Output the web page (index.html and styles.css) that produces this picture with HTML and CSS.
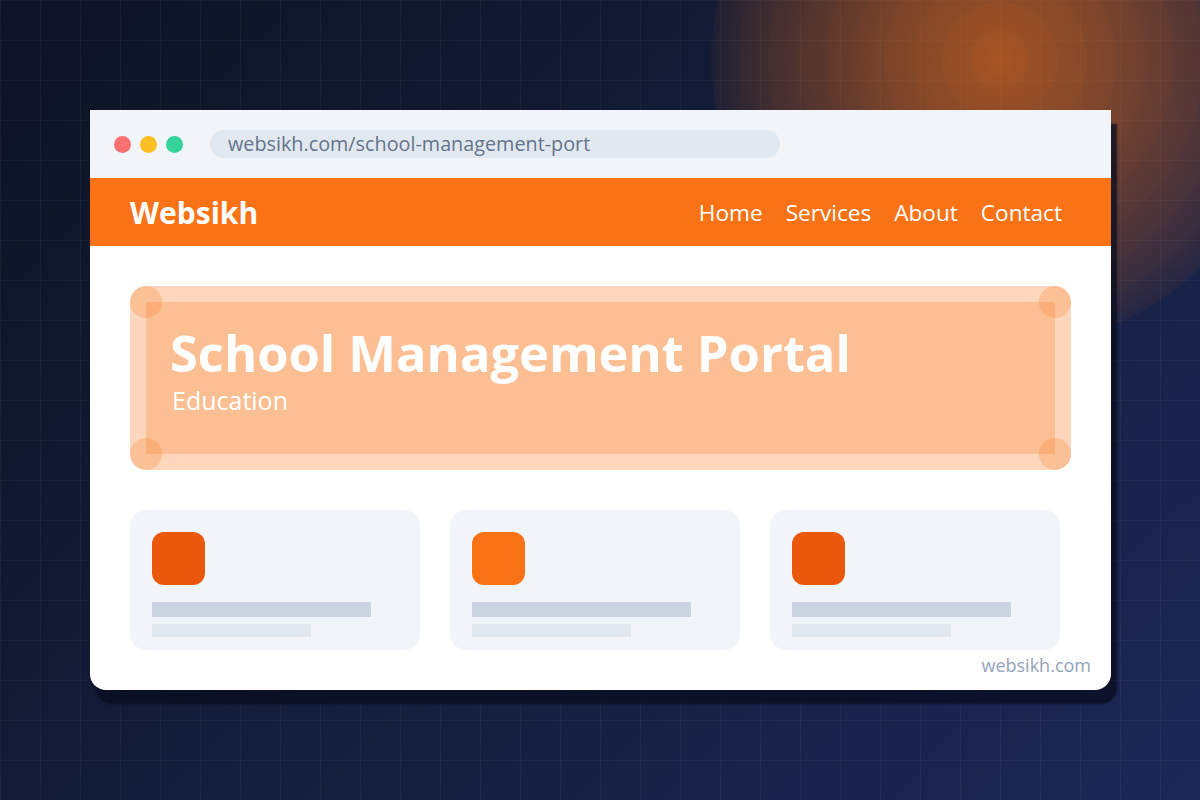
FILE: index.html
```html
<!DOCTYPE html>
<html>
<head>
<meta charset="utf-8">
<link rel="stylesheet" href="styles.css">
</head>
<body>
<div class="stage">
  <div class="window">
    <div class="titlebar">
      <div class="dots">
        <span class="dot red"></span>
        <span class="dot yellow"></span>
        <span class="dot green"></span>
      </div>
      <div class="url">websikh.com/school-management-port</div>
    </div>
    <div class="navbar">
      <div class="brand">Websikh</div>
      <nav class="links">
        <span>Home</span>
        <span>Services</span>
        <span>About</span>
        <span>Contact</span>
      </nav>
    </div>
    <div class="content">
      <div class="hero">
        <div class="hero-inner"></div>
        <span class="corner tl"></span>
        <span class="corner tr"></span>
        <span class="corner bl"></span>
        <span class="corner br"></span>
        <div class="hero-text">
          <h1>School Management Portal</h1>
          <p>Education</p>
        </div>
      </div>
      <div class="cards">
        <div class="card">
          <div class="icon dark"></div>
          <div class="bar long"></div>
          <div class="bar short"></div>
        </div>
        <div class="card">
          <div class="icon light"></div>
          <div class="bar long"></div>
          <div class="bar short"></div>
        </div>
        <div class="card">
          <div class="icon dark"></div>
          <div class="bar long"></div>
          <div class="bar short"></div>
        </div>
      </div>
      <div class="footer">websikh.com</div>
    </div>
  </div>
</div>
</body>
</html>
```
FILE: styles.css
```css
* { box-sizing: border-box; }
html, body { margin: 0; padding: 0; }
body {
  width: 1200px;
  height: 800px;
  overflow: hidden;
  font-family: "Open Sans", "Noto Sans", sans-serif;
  background:
    radial-gradient(circle 290px at 1000px 60px,
      rgba(249,115,22,0.64) 0%,
      rgba(249,115,22,0.60) 10%,
      rgba(249,115,22,0.585) 10%,
      rgba(249,115,22,0.55) 20%,
      rgba(249,115,22,0.535) 20%,
      rgba(249,115,22,0.50) 30%,
      rgba(249,115,22,0.485) 30%,
      rgba(249,115,22,0.45) 40%,
      rgba(249,115,22,0.435) 40%,
      rgba(249,115,22,0.39) 50%,
      rgba(249,115,22,0.375) 50%,
      rgba(249,115,22,0.33) 60%,
      rgba(249,115,22,0.315) 60%,
      rgba(249,115,22,0.27) 70%,
      rgba(249,115,22,0.255) 70%,
      rgba(249,115,22,0.21) 80%,
      rgba(249,115,22,0.195) 80%,
      rgba(249,115,22,0.14) 90%,
      rgba(249,115,22,0.125) 90%,
      rgba(249,115,22,0.06) 99%,
      rgba(249,115,22,0) 100%),
    linear-gradient(rgba(255,255,255,0.035) 1px, transparent 1px) 0 0 / 40px 40px,
    linear-gradient(90deg, rgba(255,255,255,0.035) 1px, transparent 1px) 0 0 / 40px 40px,
    linear-gradient(135deg, #0d1425 0%, #141d3a 50%, #1d2757 100%);
}
.stage {
  width: 1200px;
  height: 800px;
  padding: 110px 0 0 90px;
}
.window {
  width: 1021px;
  height: 580px;
  background: #ffffff;
  border-radius: 0 0 16px 16px;
  box-shadow: 6px 14px 2px rgba(8, 12, 30, 0.75);
  display: flex;
  flex-direction: column;
}
.titlebar {
  height: 68px;
  background: #f1f5f9;
  display: flex;
  align-items: center;
  padding-left: 24px;
}
.dots { display: flex; gap: 9px; }
.dot { width: 17px; height: 17px; border-radius: 50%; display: block; }
.red { background: #f87171; }
.yellow { background: #fbbf24; }
.green { background: #34d399; }
.url {
  margin-left: 27px;
  width: 570px;
  height: 28px;
  border-radius: 14px;
  background: #e2e8f0;
  color: #64748b;
  font-size: 19.8px;
  line-height: 28px;
  padding-left: 18px;
  white-space: nowrap;
}
.navbar {
  height: 68px;
  background: #f97316;
  display: flex;
  align-items: center;
  justify-content: space-between;
  padding: 0 49px 0 40px;
  color: #ffffff;
}
.brand { font-weight: 700; font-size: 30px; }
.links { display: flex; gap: 23px; font-size: 22.6px; }
.content {
  flex: 1;
  padding: 40px 20px 0 40px;
  display: flex;
  flex-direction: column;
}
.hero {
  position: relative;
  width: 941px;
  height: 184px;
  border-radius: 16px;
  background: rgba(249,115,22,0.29);
  overflow: hidden;
}
.hero-inner {
  position: absolute;
  left: 16px; top: 16px; right: 16px; bottom: 16px;
  background: rgba(249,115,22,0.24);
}
.corner {
  position: absolute;
  width: 32px; height: 32px;
  border-radius: 50%;
  background: rgba(249,115,22,0.22);
}
.tl { left: 0; top: 0; }
.tr { right: 0; top: 0; }
.bl { left: 0; bottom: 0; }
.br { right: 0; bottom: 0; }
.hero-text {
  position: relative;
  padding: 39px 0 0 40px;
  color: #ffffff;
}
.hero-text h1 {
  margin: 0;
  font-size: 50.6px;
  font-weight: 700;
  line-height: 56px;
}
.hero-text p {
  margin: 3px 0 0 0;
  padding-left: 2px;
  font-size: 25px;
  line-height: 32px;
}
.cards {
  display: flex;
  gap: 30px;
  margin-top: 40px;
}
.card {
  width: 290px;
  height: 140px;
  background: #f1f5f9;
  border-radius: 16px;
  padding: 22px 22px 0 22px;
}
.icon { width: 53px; height: 53px; border-radius: 12px; }
.icon.dark { background: #ea580c; }
.icon.light { background: #f97316; }
.bar.long { width: 219px; height: 15px; background: #cbd5e1; margin-top: 17px; }
.bar.short { width: 159px; height: 13px; background: #e2e8f0; margin-top: 7px; }
.footer {
  text-align: right;
  color: #94a3b8;
  font-size: 18px;
  line-height: 26px;
  margin-top: 2px;
}
```
